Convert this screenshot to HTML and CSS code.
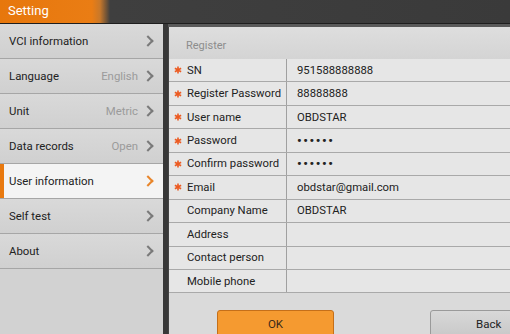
FILE: index.html
```html
<!DOCTYPE html>
<html lang="en">
  <head>
    <meta charset="UTF-8">
    <title>Setting</title>
    <link rel="stylesheet" href="styles.css">
  </head>
  <body>
    <svg width="0" height="0" style="position:absolute">
      <symbol id="star" viewBox="0 0 10 10">
        <path d="M5 0.5V9.5M1.1 2.75L8.9 7.25M1.1 7.25L8.9 2.75" stroke="currentColor" stroke-width="2"/>
      </symbol>
    </svg>
    <header class="top"><h1>Setting</h1></header>
    <div class="main">
      <nav class="menu">
        <a class="m">VCI information<i></i></a>
        <a class="m">Language<span>English</span><i></i></a>
        <a class="m">Unit<span>Metric</span><i></i></a>
        <a class="m">Data records<span>Open</span><i></i></a>
        <a class="m on">User information<i></i></a>
        <a class="m">Self test<i></i></a>
        <a class="m">About<i></i></a>
      </nav>
      <div class="split"></div>
      <section class="panel">
        <div class="card">
          <div class="cap">Register</div>
          <div class="r"><b><svg><use href="#star"/></svg></b><span>SN</span><span>951588888888</span></div>
          <div class="r"><b><svg><use href="#star"/></svg></b><span>Register Password</span><span>88888888</span></div>
          <div class="r"><b><svg><use href="#star"/></svg></b><span>User name</span><span>OBDSTAR</span></div>
          <div class="r"><b><svg><use href="#star"/></svg></b><span>Password</span><span class="pw">••••••</span></div>
          <div class="r"><b><svg><use href="#star"/></svg></b><span>Confirm password</span><span class="pw">••••••</span></div>
          <div class="r"><b><svg><use href="#star"/></svg></b><span>Email</span><span>obdstar@gmail.com</span></div>
          <div class="r"><b></b><span>Company Name</span><span>OBDSTAR</span></div>
          <div class="r"><b></b><span>Address</span><span></span></div>
          <div class="r"><b></b><span>Contact person</span><span></span></div>
          <div class="r"><b></b><span>Mobile phone</span><span></span></div>
          <div class="btns">
            <button class="b ok">OK</button>
            <button class="b back">Back</button>
          </div>
        </div>
      </section>
    </div>
  </body>
</html>
```

FILE: styles.css
```css
body {margin: 0; width: 510px; height: 334px; overflow: hidden;
  font-family: Roboto, 'Noto Sans', sans-serif; color: #222;
  background: #555; display: flex; flex-flow: column;}
.top {height: 23px; flex: none; border-bottom: 1px solid #1e1e1e;
  background: linear-gradient(90deg, #e7770c 0, #ea7d14 92px, #c8782a 100px, #3f3f3f 110px, #3a3a3a);}
h1 {margin: 0 0 0 8px; font-size: 13px; font-weight: 400; line-height: 22px;
  color: #fff;}
.main {flex: 1; display: flex; min-height: 0;}
.menu {width: 163px; flex: none; background: #d2d2d2;
  display: flex; flex-flow: column;}
.m {height: 35px; box-sizing: border-box; flex: none;
  border-bottom: 1px solid #a6a6a6; display: flex; align-items: center;
  padding: 0 8px 0 9px; font-size: 11.4px; white-space: nowrap;
  background: linear-gradient(#d9d9d9, #d0d0d0);}
.m span {margin-left: auto; color: #9b9b9b; margin-right: 6px;}
.m i {width: 6px; height: 6px; border: solid #7a7a7a; border-width: 2px 2px 0 0;
  transform: rotate(45deg); margin-left: auto; margin-right: 3px;}
.m span + i {margin-left: 0;}
.m.on {background: #f4f4f4; box-shadow: inset 4px 0 #e8790f;}
.m.on i {border-color: #e8852a;}
.split {width: 5px; flex: none; background: #383838;}
.panel {flex: 1; padding: 3px 0 0 0; background: #5a5a5a; display: flex;}
.card {flex: 1; background: #dadada; border-left: 1px solid #444;
  display: flex; flex-flow: column;}
.cap {height: 32px; flex: none; box-sizing: border-box; padding: 12px 0 0 17px;
  font-size: 11px; color: #8d8d8d;
  background: linear-gradient(#dedede, #d4d4d4);}
.r {height: 23.45px; flex: none; box-sizing: border-box; display: flex;
  align-items: center; font-size: 11.3px; border-bottom: 1px solid #a9a9a9;
  background: #e6e6e6; white-space: nowrap;}
.r:first-of-type {border-top: 1px solid #b4b4b4;}
.r b {width: 17px; flex: none; color: #ec5b22; display: flex;
  justify-content: flex-end; padding-right: 4px; box-sizing: border-box;}
.r svg {width: 8px; height: 8px;}
.r span:first-of-type {width: 99px; flex: none; padding-left: 1px;
  align-self: stretch; display: flex; align-items: center;
  border-right: 1px solid #a0a0a0;}
.r span:last-of-type {padding-left: 10px;}
.r .pw {font-size: 13px; letter-spacing: 1.6px; font-weight: 700;}
.btns {display: flex; padding: 17px 0 0 48px; gap: 96px;}
.b {font-family: inherit; font-size: 11.5px; height: 28px; border-radius: 3px;
  padding: 6px 0 0; display: flex; justify-content: center; align-items: flex-start;}
.ok {width: 117px; background: #f59a30; border: 1px solid #c56f19; color: #3a2a1a;}
.back {width: 90px; background: linear-gradient(#d8d8d8, #c8c8c8);
  border: 1px solid #9a9a9a; color: #222; justify-content: flex-start;
  padding-left: 45px;}
```
